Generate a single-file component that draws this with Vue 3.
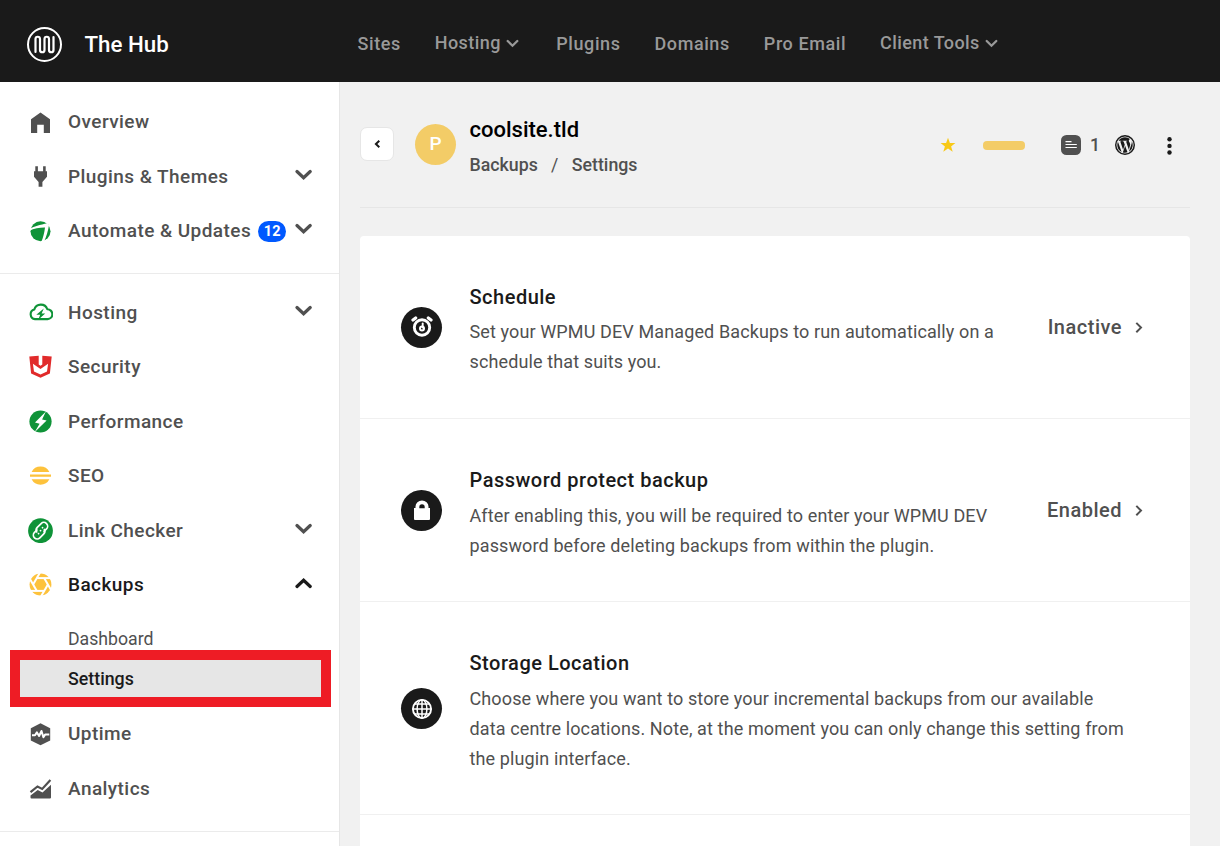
<script setup>
import { ref } from 'vue'

const navItems = [
  { label: 'Sites' },
  { label: 'Hosting', menu: true },
  { label: 'Plugins' },
  { label: 'Domains' },
  { label: 'Pro Email' },
  { label: 'Client Tools', menu: true }
]

// サイドバーのアイコン（25x25）
const icons = {
  home: '<path fill="#505050" d="M12.5 3.5 22 10.3V24h-6.2v-8.2H9.2V24H3V10.3z"/>',
  plug: '<path fill="#505050" d="M7.3 2.2h2.6v5h5.2v-5h2.6v5H19v5.5l-4.6 5.2v4.9h-3.8v-4.9L6 12.7V7.2h1.3z"/>',
  automate: '<circle cx="12.5" cy="13.3" r="10" fill="#0f9338"/><path fill="#fff" d="M1 11.5C6 8 12 7 19.5 5.3L21 7.2C20 13 18.5 18.5 15.8 24H13.3C15.3 19.5 16.3 15 17 9.6 12 9.5 6.5 10.3 1 13z"/>',
  hosting: '<path fill="none" stroke="#0f9338" stroke-width="2.1" stroke-linejoin="round" d="M7 19.1A4.9 4.9 0 0 1 6.3 9.5 6.8 6.8 0 0 1 19.3 9.3 4.9 4.9 0 0 1 19.6 19.1z"/><path fill="#0f9338" d="M15.8 8.5 8.3 14.8h3.9l-2 5 7-6.3h-3.6z"/>',
  security: '<path fill="#e12a2a" d="M1.3 2.6 10.7 1.8v8.7l1.8 1.2 1.8-1.2V1.8l9.4.8-1.8 17L12.5 23.7 3.1 19.6z"/><path fill="#fff" d="M4.9 9.8 12.5 15l7.6-5.2-1.1 7.6-6.500 3.200-6.500-3.200z"/>',
  performance: '<circle cx="12.5" cy="12.5" r="11.1" fill="#0f9338"/><path fill="#fff" d="M17.9 2.6 7 13.6l4.6 1.2-5 8.5 12-11.7-4.5-1.2z"/>',
  seo: '<path fill="#fdc23c" d="M3.6 9a10 10 0 0 1 17.8 0zM2 11.6h21v2.1H2zM3.6 16.3a10 10 0 0 0 17.8 0z"/>',
  link: '<circle cx="12.5" cy="12.7" r="12.4" fill="#0f9338"/><g fill="none" stroke="#fff" stroke-width="1.7" stroke-linecap="round" transform="rotate(-45 12.5 12.7)"><path d="M10.5 9.7H7a3.8 3.8 0 0 0 0 7.6H12.5a3.8 3.8 0 0 0 3.6-2.8"/><path d="M14.5 15.7H18a3.8 3.8 0 0 0 0-7.6H12.5a3.8 3.8 0 0 0-3.6 2.8"/><path d="M9 13.4h.1M12.5 12.7h.1M16 12h.1"/></g>',
  backups: '<circle cx="12.5" cy="12.5" r="10.9" fill="#fdc23c"/><g stroke="#fff" stroke-width="2"><path d="M9 6.1H24"/><path d="M9 6.1H24" transform="rotate(60 12.5 12.5)"/><path d="M9 6.1H24" transform="rotate(120 12.5 12.5)"/><path d="M9 6.1H24" transform="rotate(180 12.5 12.5)"/><path d="M9 6.1H24" transform="rotate(240 12.5 12.5)"/><path d="M9 6.1H24" transform="rotate(300 12.5 12.5)"/></g>',
  uptime: '<path fill="#505050" d="m12.5 2.3 9.7 4.9v12.2l-9.7 4.9-9.7-4.9V7.2z"/><path fill="none" stroke="#fff" stroke-width="2" stroke-linejoin="round" d="M4 14.2h3l1.9-2.8 2.2 3.600 2.400-5 1.900 6.300 1.700-2.700h4.200"/>',
  analytics: '<path fill="#505050" d="M2.5 19.5 9.7 14l4.8 2.5L23 8.8v12.7q0 1-1 1H3.5q-1 0-1-1z"/><path fill="none" stroke="#505050" stroke-width="2.2" d="m2.5 16.2 7-5.7 4.7 2.4 8.2-8.8"/>'
}

const primary = [
  { label: 'Overview', icon: 'home' },
  { label: 'Plugins & Themes', icon: 'plug', chevron: true },
  { label: 'Automate & Updates', icon: 'automate', badge: 12, chevron: true }
]

const services = [
  { label: 'Hosting', icon: 'hosting', chevron: true },
  { label: 'Security', icon: 'security' },
  { label: 'Performance', icon: 'performance' },
  { label: 'SEO', icon: 'seo' },
  { label: 'Link Checker', icon: 'link', chevron: true },
  { label: 'Backups', icon: 'backups', chevron: true, children: ['Dashboard', 'Settings'] },
  { label: 'Uptime', icon: 'uptime' },
  { label: 'Analytics', icon: 'analytics' }
]

const openItem = ref('Backups')
const currentPage = ref('Settings')

const toggle = (item) => {
  if (!item.chevron) return
  openItem.value = openItem.value === item.label ? '' : item.label
}

const settings = [
  {
    icon: 'clock',
    title: 'Schedule',
    text: 'Set your WPMU DEV Managed Backups to run automatically on a schedule that suits you.',
    status: 'Inactive'
  },
  {
    icon: 'lock',
    title: 'Password protect backup',
    text: 'After enabling this, you will be required to enter your WPMU DEV password before deleting backups from within the plugin.',
    status: 'Enabled'
  },
  {
    icon: 'globe',
    title: 'Storage Location',
    text: 'Choose where you want to store your incremental backups from our available data centre locations. Note, at the moment you can only change this setting from the plugin interface.'
  }
]
</script>

<template>
  <div class="hub">
    <header class="topbar">
      <div class="brand">
        <svg class="logo" width="35" height="35" viewBox="0 0 35 35" fill="none" stroke="#fff">
          <circle cx="17.5" cy="17.5" r="16.5" stroke-width="2" />
          <path stroke-width="2.2" stroke-linecap="round" d="M8.500 25V12a2.250 2.250 0 0 1 4.500 0v11a2.250 2.250 0 0 0 4.500 0V12a2.250 2.250 0 0 1 4.500 0v11a2.250 2.250 0 0 0 4.500 0V10" />
        </svg>
        <span class="brand-name">The Hub</span>
      </div>
      <nav class="nav">
        <a v-for="item in navItems" :key="item.label" class="nav-link" :class="{ 'has-menu': item.menu }">
          {{ item.label }}
          <svg v-if="item.menu" width="13" height="9" viewBox="0 0 13 9">
            <path d="M1.7 2l4.800 4.700L11.300 2" fill="none" stroke="currentColor" stroke-width="2.300" stroke-linecap="round" />
          </svg>
        </a>
      </nav>
    </header>

    <div class="body">
      <aside class="sidebar">
        <ul v-for="(group, g) in [primary, services]" :key="g" class="group">
          <li v-for="item in group" :key="item.label">
            <a class="item" :class="{ open: openItem === item.label }" @click="toggle(item)">
              <svg class="item-icon" width="25" height="25" viewBox="0 0 25 25" v-html="icons[item.icon]"></svg>
              <span class="item-label">{{ item.label }}</span>
              <span v-if="item.badge" class="badge">{{ item.badge }}</span>
              <svg v-if="item.chevron" class="chevron" width="18" height="12" viewBox="0 0 18 12">
                <path d="M2 2.5 8.600 8.700l6.600-6.200" fill="none" stroke="currentColor" stroke-width="3.200" stroke-linecap="round" />
              </svg>
            </a>
            <ul v-if="item.children && openItem === item.label" class="sub">
              <li
                v-for="child in item.children"
                :key="child"
                class="sub-item"
                :class="{ current: currentPage === child }"
                @click="currentPage = child"
              >
                {{ child }}
              </li>
            </ul>
          </li>
        </ul>
      </aside>

      <main class="main">
        <div class="site-head">
          <button class="back">
            <svg width="8" height="10" viewBox="0 0 8 10">
              <path d="M6.300 1.700 2.900 5l3.400 3.300" fill="none" stroke="#1a1a1a" stroke-width="2" />
            </svg>
          </button>
          <div class="avatar">P</div>
          <div class="site-info">
            <div class="site-name">coolsite.tld</div>
            <div class="crumbs">
              <span>Backups</span><span class="slash">/</span><span>Settings</span>
            </div>
          </div>
          <div class="tools">
            <svg class="star" width="16" height="16" viewBox="0 0 16 16">
              <path fill="#f8c917" d="M8 .8l1.900 5.100 5.500.1-4.300 3.400 1.600 5.300L8 11.600l-4.700 3.100 1.600-5.300L.6 6l5.500-.1z" />
            </svg>
            <span class="pill"></span>
            <svg class="note" width="20" height="20" viewBox="0 0 20 20">
              <rect width="20" height="20" rx="5.5" fill="#505050" />
              <path d="M4.500 6.600h6M4.500 9.500h11.300M4.500 12.500h11.300" stroke="#fff" stroke-width="1.200" />
            </svg>
            <span class="count">1</span>
            <svg class="wp" width="20" height="20" viewBox="8 8 496 496" fill="#1a1a1a">
              <circle cx="256" cy="256" r="230" fill="none" stroke="#1a1a1a" stroke-width="36" />
              <path transform="translate(25.6 25.6) scale(.9)" d="M61.700 169.400l101.500 278C92.200 413 43.300 340.200 43.300 256c0-30.900 6.600-60.100 18.400-86.600zm337.900 75.900c0-26.300-9.400-44.500-17.500-58.700-10.800-17.500-20.900-32.400-20.900-49.900 0-19.600 14.800-37.800 35.700-37.800.9 0 1.800.1 2.800.2-37.900-34.700-88.300-55.900-143.700-55.900-74.300 0-139.700 38.100-177.800 95.900 5 .2 9.700.3 13.700.3 22.200 0 56.700-2.700 56.700-2.700 11.500-.7 12.800 16.200 1.400 17.500 0 0-11.500 1.300-24.300 2l77.500 230.400L249.800 247l-33.100-90.800c-11.500-.7-22.300-2-22.300-2-11.500-.7-10.100-18.200 1.300-17.500 0 0 35.100 2.700 56 2.700 22.200 0 56.700-2.700 56.700-2.700 11.500-.7 12.800 16.200 1.400 17.500 0 0-11.500 1.300-24.300 2l76.900 228.700 21.200-70.900c9-29.400 16-50.500 16-68.700zm-139.900 29.300l-63.800 185.500c19.100 5.600 39.200 8.700 60.100 8.700 24.800 0 48.500-4.300 70.600-12.100-.6-.9-1.100-1.900-1.500-2.900l-65.400-179.200zm183-120.700c.9 6.800 1.400 14 1.400 21.900 0 21.600-4 45.800-16.200 76.200l-65 187.900C426.200 403 468.700 334.500 468.700 256c0-37-9.400-71.800-26-102.100z" />
            </svg>
            <svg class="more" width="5" height="19" viewBox="0 0 5 19" fill="#1a1a1a">
              <circle cx="2.5" cy="3.3" r="2.200" />
              <circle cx="2.5" cy="9.9" r="2.200" />
              <circle cx="2.5" cy="16.500" r="2.200" />
            </svg>
          </div>
        </div>

        <section class="card">
          <div v-for="row in settings" :key="row.title" class="row">
            <div class="row-icon">
              <svg v-if="row.icon === 'clock'" width="22" height="22" viewBox="0 0 22 22" fill="none" stroke="#fff">
                <circle cx="11" cy="11.5" r="7.700" stroke-width="2.900" />
                <path d="M2 4 4.700 1.900M20 4l-2.700-2.100" stroke-width="3.200" stroke-linecap="round" />
                <path d="M11.700 7.500v4" stroke-width="1.900" stroke-linecap="round" />
                <circle cx="11" cy="12.500" r="2" stroke-width="2" />
              </svg>
              <svg v-else-if="row.icon === 'lock'" width="22" height="22" viewBox="0 0 22 22">
                <path fill="#fff" d="M3 9h1.500V7.500a6.500 6 0 0 1 13 0V9H19v11q0 1-1 1H4q-1 0-1-1z" />
                <path fill="#1a1a1a" d="M8.300 9.300V8a2.700 2.700 0 0 1 5.400 0v1.300z" />
              </svg>
              <svg v-else width="22" height="22" viewBox="0 0 22 22" fill="none" stroke="#fff" stroke-width="1.500">
                <circle cx="11" cy="11" r="9.100" stroke-width="1.900" />
                <ellipse cx="11" cy="11" rx="4.900" ry="9.200" />
                <path d="M11 2v18M2 11h18M3.500 6h15M3.500 16h15" />
              </svg>
            </div>
            <div class="row-text">
              <h3>{{ row.title }}</h3>
              <p>{{ row.text }}</p>
            </div>
            <div v-if="row.status" class="status">
              {{ row.status }}
              <svg width="8" height="12" viewBox="0 0 8 12">
                <path d="M1.300 1.900 6 6.600l-4.700 4.700" fill="none" stroke="currentColor" stroke-width="2" />
              </svg>
            </div>
          </div>
        </section>
      </main>
    </div>
  </div>
</template>

<style>
body {
  margin: 0;
  overflow: hidden;
}
</style>

<style scoped>
.hub {
  width: 1220px;
  height: 846px;
  display: flex;
  flex-direction: column;
  overflow: hidden;
  font-family: Roboto, "Liberation Sans", sans-serif;
  color: #505050;
  background: #f1f1f1;
}

.hub ul {
  list-style: none;
  margin: 0;
  padding: 0;
}

.topbar {
  height: 82px;
  flex-shrink: 0;
  display: flex;
  align-items: center;
  background: #1a1a1a;
}

.brand {
  width: 330.5px;
  padding: 7px 0 0 27px;
  display: flex;
  align-items: center;
  gap: 22.5px;
}

.brand-name {
  padding-bottom: 2px;
  font-size: 22.3px;
  font-weight: 500;
  line-height: 30px;
  color: #fff;
}

.nav {
  display: flex;
  align-items: center;
  gap: 34px;
  padding-top: 5px;
}

.nav-link {
  display: flex;
  align-items: center;
  gap: 5px;
  color: #999;
  font-size: 18px;
  font-weight: 500;
  line-height: 24px;
  letter-spacing: 0.58px;
}

.has-menu {
  padding: 0 3.5px 2px 0;
  letter-spacing: 0.42px;
}

.nav-link svg {
  margin-top: 2px;
}

.body {
  flex: 1;
  display: flex;
  min-height: 0;
}

.sidebar {
  width: 339px;
  flex-shrink: 0;
  background: #fff;
  border-right: 1px solid #e6e6e6;
}

.group {
  border-bottom: 1px solid #ebebeb;
}

.hub .group {
  padding: 12.5px 0 15px;
}

.hub .group + .group {
  padding: 11.2px 0 15.3px;
}

.item {
  height: 54.5px;
  display: flex;
  align-items: center;
  padding: 0 26px 0 28px;
  font-size: 19px;
  font-weight: 500;
  letter-spacing: 0.44px;
}

.item-icon {
  flex-shrink: 0;
  margin-right: 15px;
}

.item-label {
  white-space: nowrap;
}

.badge {
  width: 28px;
  height: 21px;
  margin: 1px 0 0 7px;
  border-radius: 11px;
  background: #0059ff;
  color: #fff;
  font-size: 14.5px;
  font-weight: 700;
  line-height: 21px;
  text-align: center;
  letter-spacing: 0;
}

.chevron {
  margin-left: auto;
  margin-bottom: 3px;
}

.item.open {
  color: #1a1a1a;
}

.item.open .chevron {
  transform: scaleY(-1);
}

.hub .sub {
  padding: 6.6px 0 7.9px;
}

.sub-item {
  height: 40px;
  box-sizing: border-box;
  padding-left: 68px;
  font-size: 17.7px;
  line-height: 41px;
}

.sub-item.current {
  height: 57px;
  margin: -8.5px 8px -8.5px 10px;
  padding-left: 48px;
  border: 10px solid #ee1c25;
  background: #e6e6e6;
  color: #1a1a1a;
  font-size: 17.8px;
  font-weight: 500;
  line-height: 38px;
}

.main {
  flex: 1;
  padding: 0 30px 0 20px;
  display: flex;
  flex-direction: column;
}

.site-head {
  height: 125px;
  flex-shrink: 0;
  display: flex;
  align-items: center;
  border-bottom: 1px solid #e6e6e6;
}

.back {
  width: 34px;
  height: 34px;
  margin-bottom: 2px;
  padding: 0;
  border: 1px solid #e6e6e6;
  border-radius: 7px;
  background: #fff;
  display: flex;
  align-items: center;
  justify-content: center;
}

.avatar {
  width: 41px;
  height: 41px;
  margin-left: 21px;
  border-radius: 50%;
  background: #f3cc67;
  color: #fff;
  font-size: 19px;
  font-weight: 500;
  line-height: 40px;
  text-align: center;
}

.site-info {
  margin-left: 13.5px;
  padding-top: 4px;
}

.site-name {
  font-size: 22px;
  font-weight: 500;
  line-height: 36px;
  color: #000;
}

.crumbs {
  display: flex;
  font-size: 17.75px;
  font-weight: 500;
  line-height: 34px;
}

.slash {
  width: 34px;
  text-align: center;
  font-weight: 400;
}

.tools {
  margin-left: auto;
  display: flex;
  align-items: center;
  padding: 1px 18px 0 0;
}

.pill {
  width: 42px;
  height: 9px;
  margin: 0 36px 0 27px;
  border-radius: 4px;
  background: #f3cc67;
}

.count {
  width: 14px;
  margin: 0 13px 0 7px;
  font-size: 17.7px;
  font-weight: 500;
  text-align: center;
}

.more {
  margin-left: 32px;
}

.card {
  flex: 1;
  margin-top: 28px;
  border-radius: 4px 4px 0 0;
  background: #fff;
}

.row {
  display: flex;
  align-items: center;
  padding: 41px 47px 40.8px 41px;
  border-bottom: 1px solid #f0f0f0;
}

.row:last-child {
  padding-bottom: 40.2px;
}

.row-icon {
  width: 41px;
  height: 41px;
  flex-shrink: 0;
  margin-right: 27.5px;
  border-radius: 50%;
  background: #1a1a1a;
  display: flex;
  align-items: center;
  justify-content: center;
}

.row-text {
  max-width: 660px;
  padding-top: 5px;
}

.row-text h3 {
  margin: 0 0 5.4px;
  color: #1a1a1a;
  font-size: 20px;
  font-weight: 500;
  line-height: 30px;
  letter-spacing: 0.5px;
}

.row-text p {
  margin: 0;
  font-size: 18px;
  line-height: 30px;
  letter-spacing: 0.118px;
}

.status {
  margin-left: auto;
  padding-left: 40px;
  display: flex;
  align-items: center;
  gap: 13px;
  font-size: 20px;
  font-weight: 500;
  letter-spacing: 0.5px;
}
</style>
